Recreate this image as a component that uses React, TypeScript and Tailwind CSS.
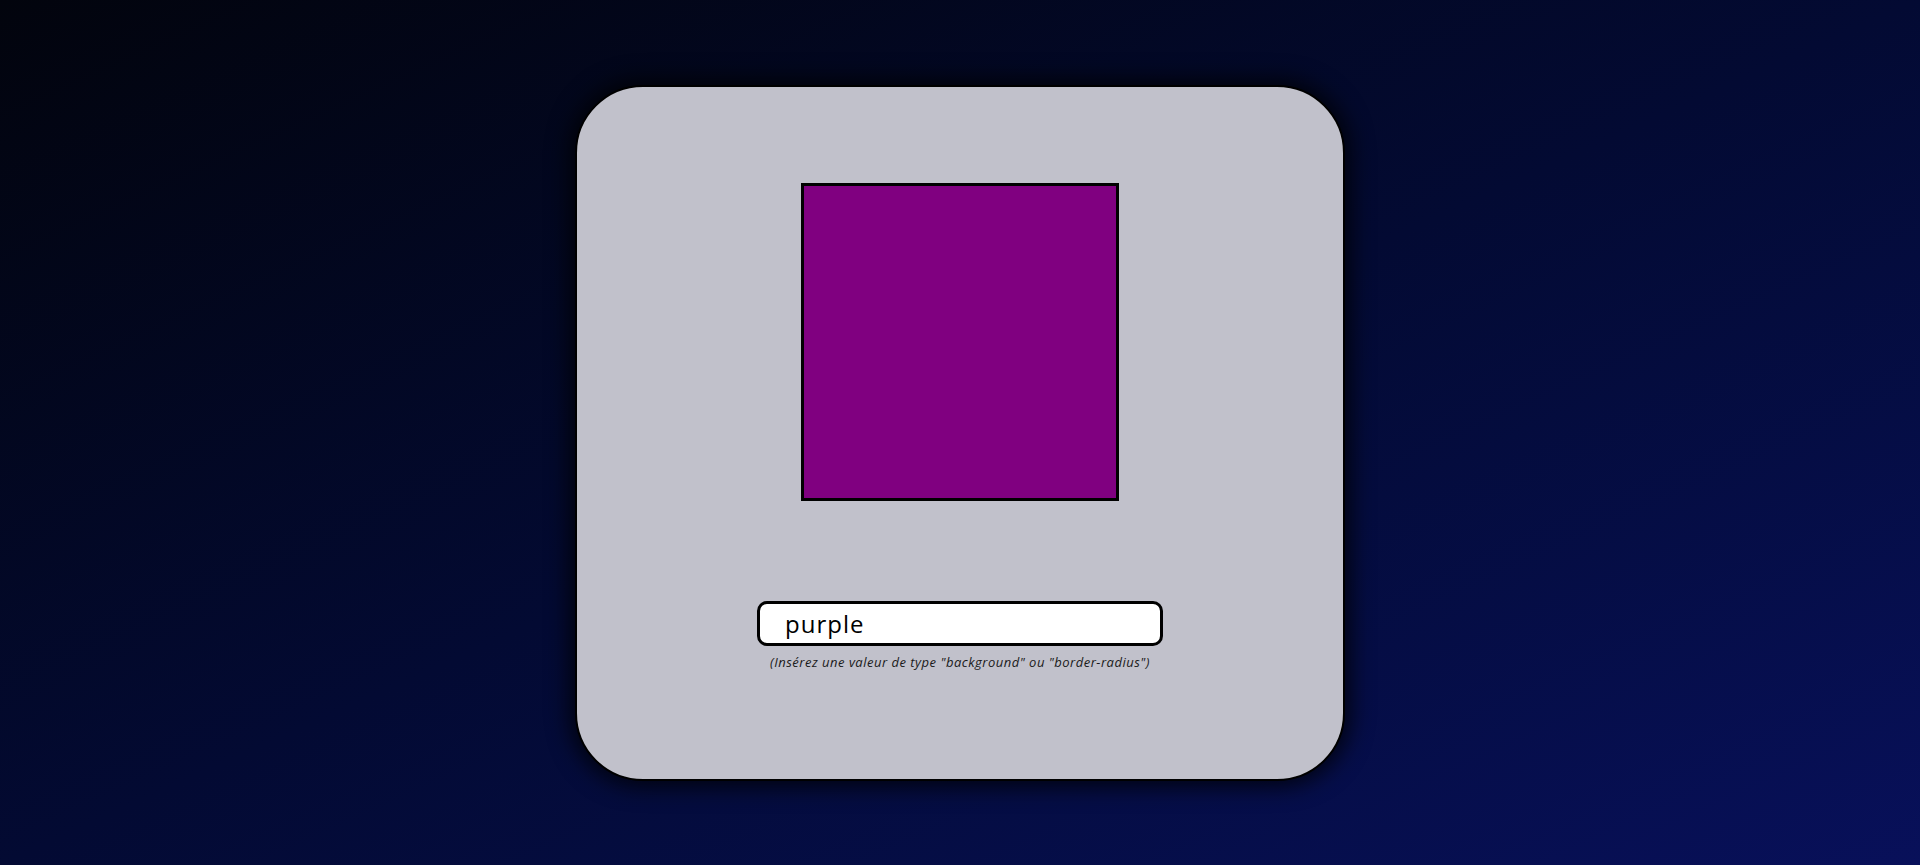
import React, { useState } from 'react';

const App: React.FC = () => {
  const [value, setValue] = useState('purple');

  return (
    <div className="w-full h-screen flex items-center justify-center bg-linear-to-br from-[#02040d] via-[#030a33] to-[#08105a] font-['Open_Sans',sans-serif]">
      <div className="w-[770px] h-[696px] border-2 border-black rounded-[68px] bg-[#c1c1cb] shadow-[0_0_22px_6px_rgba(0,0,0,0.75)] flex flex-col items-center pt-[96px]">
        <div className="w-[318px] h-[318px] shrink-0 border-[3px] border-black bg-[purple]" />
        <input
          type="text"
          value={value}
          onChange={(e) => setValue(e.target.value)}
          className="mt-[100px] w-[406px] h-[45px] shrink-0 border-[3px] border-black rounded-[10px] bg-white pl-[25px] pr-4 text-[24px] tracking-[1px] text-black outline-none"
        />
        <p className="mt-[8px] text-[13px] leading-4 tracking-[0.5px] italic text-[#1a1a1a]">
          (Insérez une valeur de type "background" ou "border-radius")
        </p>
      </div>
    </div>
  );
};

export default App;
